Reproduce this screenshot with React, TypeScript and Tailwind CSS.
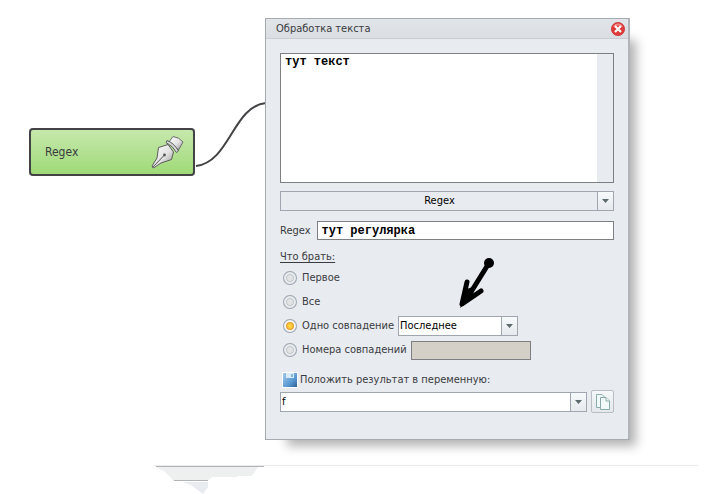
import React from "react";

const SANS = "font-['DejaVu_Sans_Condensed','DejaVu_Sans',sans-serif]";
const MONO = "font-['Liberation_Mono',monospace]";

function DropArrow() {
  return (
    <span className="pointer-events-none absolute inset-y-px right-px flex w-4 items-center justify-center border-l border-[#9fa6b0] bg-linear-to-b from-[#f7fafb] to-[#e6eaee]">
      <svg width="7" height="4" viewBox="0 0 7 4" aria-hidden="true">
        <path d="M0 0H7L3.5 4Z" fill="#5d6a6c" />
      </svg>
    </span>
  );
}

function Combo({ label, value, className, selectClass }: { label: string; value: string; className: string; selectClass: string }) {
  return (
    <div className={`relative h-5 ${className}`}>
      <select
        aria-label={label}
        className={`block h-5 w-full appearance-none border border-[#9fa6b0] pr-4 pl-px text-black outline-none ${selectClass}`}
      >
        <option>{value}</option>
      </select>
      <DropArrow />
    </div>
  );
}

function Choice({ label, checked, children }: { label: string; checked?: boolean; children?: React.ReactNode }) {
  return (
    <div className="flex h-6 items-center gap-1 pl-1">
      <label className="flex items-center gap-1.5">
        <input
          type="radio"
          name="take"
          defaultChecked={checked}
          className="size-3 shrink-0 appearance-none rounded-full border-2 border-[#e8ebf0] bg-[#e2e3e4] inset-ring inset-ring-[#c3c6ca] ring-1 ring-[#9ea5af] outline-none checked:border-[#f3f5f8] checked:bg-radial checked:from-[#ffe04a] checked:to-[#f09a10] checked:inset-ring-[#e8a030]"
        />
        <span>{label}</span>
      </label>
      {children}
    </div>
  );
}

function PenIcon() {
  return (
    <svg width="34" height="34" viewBox="0 0 34 34" strokeLinejoin="round" aria-hidden="true">
      <defs>
        <linearGradient id="steel" x1="0" y1="0" x2="1" y2="1">
          <stop offset="0" stopColor="#fff" />
          <stop offset="0.55" stopColor="#e2e2e2" />
          <stop offset="1" stopColor="#8d8d8d" />
        </linearGradient>
      </defs>
      <path d="M7.500 12.500L17 9.500L22.500 17L20.500 24.500L10 28L2.500 33L1 31L6 23Z" fill="url(#steel)" stroke="#5c5c5c" />
      <path d="M1.500 32.500L13 20.500" stroke="#555" />
      <circle cx="13.5" cy="20" r="1.400" fill="#555" />
      <path d="M17.500 7.500L22 1.500Q28 2 32 7L27.500 15Z" fill="url(#steel)" stroke="#6b6b6b" />
      <path d="M16 5.500Q23 8 27.500 16L25.500 17.500Q22 11 15 7.500Z" fill="#d6d6d6" stroke="#5c5c5c" />
    </svg>
  );
}

function CloseIcon() {
  return (
    <svg width="14" height="14" viewBox="0 0 14 14" aria-hidden="true">
      <circle cx="7" cy="7" r="6.6" fill="#e23a3a" stroke="#c93636" strokeWidth="0.8" />
      <path d="M2 5a5.3 5.3 0 0 1 10 0Q7 2 2 5Z" fill="#f08a85" />
      <path d="M4 4L10 10M10 4L4 10" stroke="#fff" strokeWidth="2.2" />
    </svg>
  );
}

function DiskIcon() {
  return (
    <svg width="16" height="16" viewBox="0 0 16 16" aria-hidden="true">
      <defs>
        <linearGradient id="disk" x1="0" y1="0" x2="1" y2="1">
          <stop offset="0" stopColor="#a3c9ea" />
          <stop offset="0.6" stopColor="#5c9bd4" />
          <stop offset="1" stopColor="#2c5f96" />
        </linearGradient>
      </defs>
      <rect width="16" height="16" fill="#fff" />
      <rect x="1" y="1" width="14" height="14" fill="url(#disk)" />
      <rect x="4" y="1" width="8" height="5" fill="#d9ebf8" />
      <rect x="9" y="2" width="2" height="3" fill="#86b7e0" />
    </svg>
  );
}

function CopyIcon() {
  return (
    <svg width="16" height="18" viewBox="0 0 16 18" fill="#f1f9f9" stroke="#8aabac" aria-hidden="true">
      <path d="M1.5 1.5H7L10.5 5V14.5H1.5Z" />
      <path d="M5.5 4.5H11L14.5 8V16.5H5.5Z" />
      <path d="M11 4.5V8H14.5" />
    </svg>
  );
}

export default function App() {
  return (
    <main className={`relative min-h-screen overflow-hidden bg-white text-[11px] leading-4 text-[#3a3b40] ${SANS}`}>
      <svg className="absolute top-0 left-0" width="717" height="494" viewBox="0 0 717 494" fill="none" aria-hidden="true">
        <path d="M196 166C230 162 233 106 266 103" stroke="#434245" strokeWidth="2" />
        <path d="M154 465.5H698" stroke="#ebebeb" />
        <path d="M156 467H258L252 476H238V477H212L208 481H174L165 472Z" fill="#eef0f0" />
        <path d="M183 482H208V487L203 494L191 485Z" fill="#e8ebf0" />
        <path d="M156 466.5H264M174 480.5H208" stroke="#b1b3b9" />
      </svg>

      <section className="absolute top-32 left-[29px] flex h-12 w-[166px] items-center justify-between rounded-[4px] border-2 border-[#434245] bg-linear-to-b from-[#c6e8ac] to-[#9fda77] pr-2 pl-3.5 text-[12px]">
        <span>Regex</span>
        <PenIcon />
      </section>

      <section className="absolute top-[18px] left-[265px] w-[365px] border border-r-2 border-[#a5abb1] border-r-[#b1b4ba] bg-[#e8ebf0] shadow-[14px_14px_10px_-8px_rgba(0,0,0,0.3)]">
        <header className="flex h-5 items-center justify-between border-b border-[#c9cdd3] bg-linear-to-b from-[#e1e5e9] to-[#dadee2] pr-[3px] pl-2.5">
          <h1>Обработка текста</h1>
          <button type="button" aria-label="Закрыть">
            <CloseIcon />
          </button>
        </header>

        <div className="flex flex-col px-3.5 pt-3.5 pb-[26px]">
          <div className="flex h-[130px] border border-[#7e7f82]">
            <textarea
              aria-label="Текст"
              defaultValue="тут текст"
              className={`min-w-0 flex-1 resize-none bg-white px-1 text-[12px] leading-4 font-bold text-black outline-none ${MONO}`}
            />
            <div className="w-4" />
          </div>

          <Combo label="Действие" value="Regex" className="mt-2" selectClass="bg-[#e8ebf0] text-center [text-align-last:center]" />

          <label className="mt-2.5 flex items-center gap-1.5">
            <span>Regex</span>
            <input
              defaultValue="тут регулярка"
              className={`h-[19px] min-w-0 flex-1 border border-[#7e7f82] bg-white px-1 text-[12px] font-bold text-black outline-none ${MONO}`}
            />
          </label>

          <fieldset className="mt-[9px]">
            <legend className="mb-px underline underline-offset-2">Что брать:</legend>
            <Choice label="Первое" />
            <Choice label="Все" />
            <Choice label="Одно совпадение" checked>
              <Combo label="Совпадение" value="Последнее" className="w-[120px]" selectClass="bg-white" />
            </Choice>
            <Choice label="Номера совпадений">
              <input aria-label="Номера" disabled className="h-[19px] w-[120px] border border-[#7e7f82] bg-[#d4d0c8]" />
            </Choice>
          </fieldset>

          <div className="mt-2.5 flex items-center gap-0.5 pl-0.5">
            <DiskIcon />
            <label htmlFor="result">Положить результат в переменную:</label>
          </div>

          <div className="mt-0.5 flex items-center gap-1">
            <div className="relative h-5 flex-1">
              <select id="result" className="block h-5 w-full appearance-none border border-[#9fa6b0] bg-white pr-4 pl-px text-black outline-none">
                <option>f</option>
              </select>
              <DropArrow />
            </div>
            <button
              type="button"
              aria-label="Копировать"
              className="flex size-[23px] items-center justify-center rounded-[2px] border border-[#b9bec6] bg-linear-to-b from-[#f5f7f8] to-[#e4e8ec]"
            >
              <CopyIcon />
            </button>
          </div>
        </div>
      </section>

      <svg className="absolute top-[255px] left-[455px]" width="42" height="54" viewBox="0 0 42 54" fill="none" aria-hidden="true">
        <circle cx="34" cy="8" r="5" fill="#000" />
        <path d="M34 8L16 37M12 27L7 49L26 36" stroke="#000" strokeWidth="5" strokeLinecap="round" strokeLinejoin="round" />
        <path d="M12 35L18 33L17 42L7 50Z" fill="#000" stroke="#000" strokeWidth="2" />
      </svg>
    </main>
  );
}
